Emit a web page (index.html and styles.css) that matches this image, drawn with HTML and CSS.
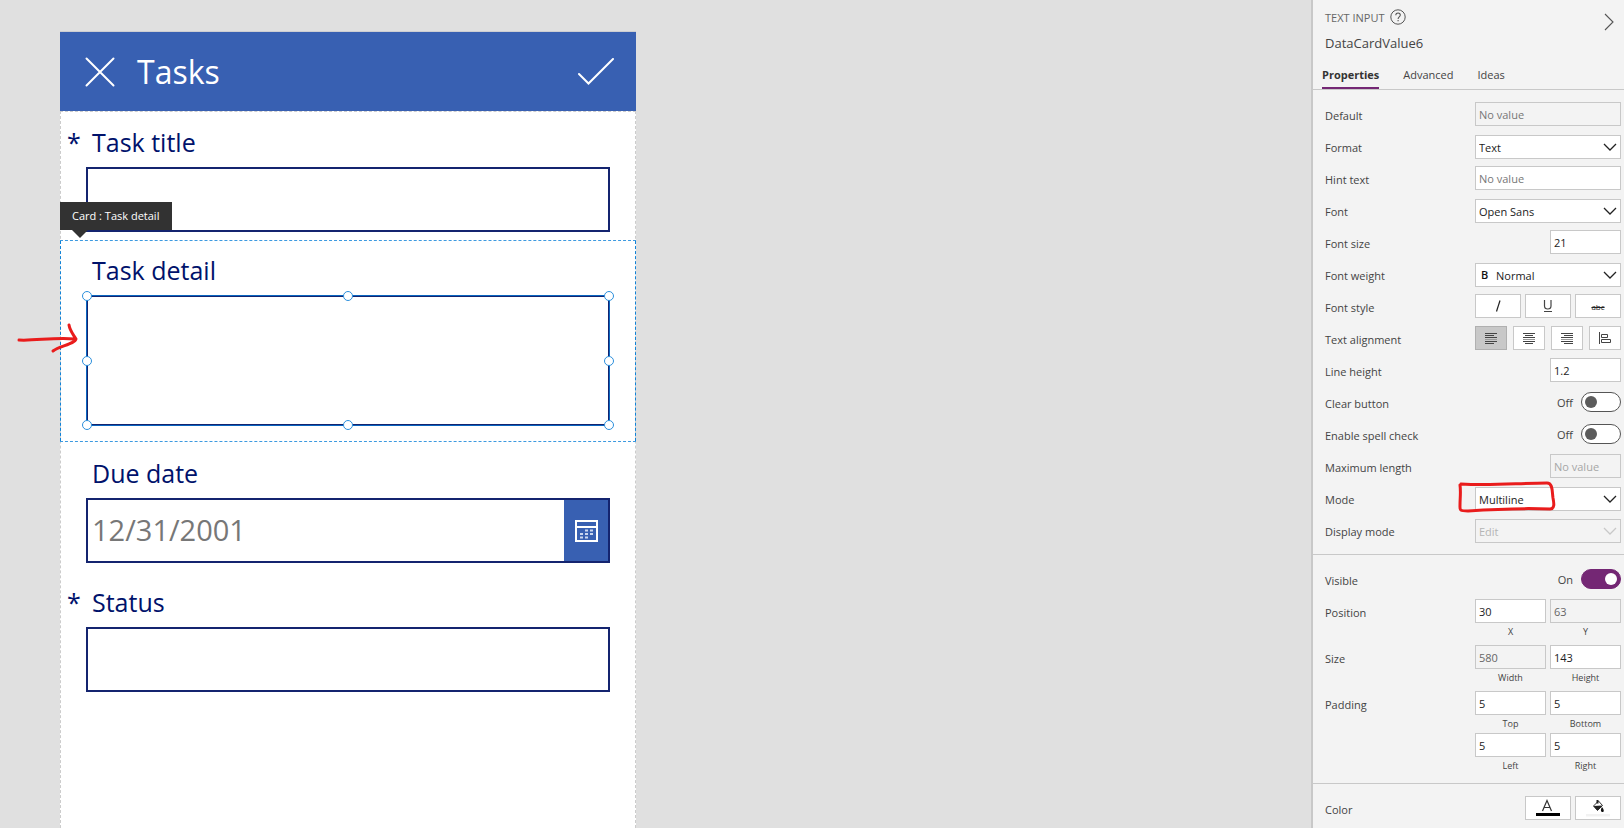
FILE: index.html
```html
<!DOCTYPE html>
<html lang="en">
<head>
<meta charset="utf-8">
<title>Tasks</title>
<link rel="stylesheet" href="styles.css">
</head>
<body>
<svg class="defs" aria-hidden="true">
  <symbol id="chevron" viewBox="0 0 14 8"><path d="M1 1l6 6 6-6" fill="none" stroke="currentColor" stroke-width="1.3"/></symbol>
</svg>
<main class="canvas">
  <section class="phone">
    <header class="app-bar">
      <button class="bar-button" aria-label="Cancel"><svg width="30" height="30" viewBox="0 0 30 30"><path d="M1.500 1.500l27 27M28.500 1.500l-27 27"/></svg></button>
      <h1 class="app-title">Tasks</h1>
      <button class="bar-button" aria-label="Save"><svg width="36" height="27" viewBox="0 0 36 27"><path d="M1 16l9.500 9.500L35 1"/></svg></button>
    </header>
    <form class="form">
      <div class="card">
        <label class="card-label" for="title"><span class="star">*</span>Task title</label>
        <div class="field"><input class="box" id="title" type="text"></div>
      </div>
      <div class="card card-selected">
        <div class="tooltip" role="tooltip">Card : Task detail</div>
        <label class="card-label" for="detail"><span class="star"></span>Task detail</label>
        <div class="field selection">
          <textarea class="box box-multi" id="detail"></textarea>
          <i class="handle top left"></i><i class="handle top center"></i><i class="handle top right"></i>
          <i class="handle middle left"></i><i class="handle middle right"></i>
          <i class="handle bottom left"></i><i class="handle bottom center"></i><i class="handle bottom right"></i>
        </div>
      </div>
      <div class="card">
        <label class="card-label" for="due"><span class="star"></span>Due date</label>
        <div class="field box date">
          <input class="date-input" id="due" type="text" placeholder="12/31/2001">
          <button type="button" class="date-button" aria-label="Open calendar">
            <svg width="23" height="22" viewBox="0 0 23 22"><path d="M1 1h21v20H1zM1 7h21" fill="none" stroke="#fff" stroke-width="2"/><path d="M10 9.500h3v2h-3zM15 9.500h3v2h-3zM5 13h3v2H5zM10 13h3v2h-3zM15 13h3v2h-3zM5 16.500h3v2H5zM10 16.500h3v2h-3z" fill="#cbd7ef"/></svg>
          </button>
        </div>
      </div>
      <div class="card">
        <label class="card-label" for="status"><span class="star">*</span>Status</label>
        <div class="field"><input class="box" id="status" type="text"></div>
      </div>
    </form>
  </section>
  <svg class="arrow" width="62" height="34" viewBox="0 0 62 34" aria-hidden="true"><path d="M2 18C18 19 38 15 58 17M52 3c1 6 4 9 7 14c-1 5-17 7-23 12" /></svg>
</main>

<aside class="panel">
  <header class="panel-head">
    <div class="panel-kind">TEXT INPUT
      <svg width="16" height="16" viewBox="0 0 16 16" fill="none" stroke="#555"><circle cx="8" cy="8" r="7.200"/><path d="M5.800 6.200c0-3 4.500-2.800 4.500-.1 0 1.700-2.200 1.900-2.200 3.800M8.100 11v1.300" stroke-width="1.100"/></svg>
    </div>
    <button class="collapse" aria-label="Collapse panel"><svg width="10" height="18" viewBox="0 0 10 18"><path d="M1 1l8 8-8 8" fill="none" stroke="#555" stroke-width="1.100"/></svg></button>
    <div class="panel-name">DataCardValue6</div>
  </header>
  <nav class="tabs">
    <button class="tab tab-active">Properties</button>
    <button class="tab">Advanced</button>
    <button class="tab">Ideas</button>
  </nav>

  <div class="group">
    <div class="row"><label for="p1">Default</label><div class="control"><input class="input readonly" id="p1" placeholder="No value"></div></div>
    <div class="row row-select"><label for="p2">Format</label><div class="control select"><select id="p2"><option>Text</option></select><svg class="chev"><use href="#chevron"/></svg></div></div>
    <div class="row"><label for="p3">Hint text</label><div class="control"><input class="input" id="p3" placeholder="No value"></div></div>
    <div class="row row-select"><label for="p4">Font</label><div class="control select"><select id="p4"><option>Open Sans</option></select><svg class="chev"><use href="#chevron"/></svg></div></div>
    <div class="row"><label for="p5">Font size</label><div class="control"><input class="input half" id="p5" value="21"></div></div>
    <div class="row row-select"><label for="p6">Font weight</label><div class="control select weight"><span class="weight-mark">B</span><select id="p6"><option>Normal</option></select><svg class="chev"><use href="#chevron"/></svg></div></div>
    <div class="row"><span>Font style</span><div class="control buttons">
      <button class="tool" aria-label="Italic"><svg width="16" height="16" viewBox="0 0 16 16"><path d="M10 2.500l-3.500 11" stroke="#222" stroke-width="1.200"/></svg></button>
      <button class="tool" aria-label="Underline"><svg width="16" height="16" viewBox="0 0 16 16"><path d="M4.500 2v6c0 4 6.500 4 6.500 0V2M4 13.500h8" fill="none" stroke="#444" stroke-width="1.200"/></svg></button>
      <button class="tool strike" aria-label="Strikethrough">abc</button>
    </div></div>
    <div class="row"><span>Text alignment</span><div class="control buttons align">
      <button class="tool tool-on" aria-label="Align left"><svg width="12" height="12" viewBox="0 0 12 12"><path d="M0 1.500h12M0 3.500h9M0 5.500h12M0 9.500h12M0 11.500h9"/><path class="soft" d="M0 7.500h12"/></svg></button>
      <button class="tool" aria-label="Align center"><svg width="12" height="12" viewBox="0 0 12 12"><path d="M0 1.500h12M2 3.500h8M0 5.500h12M0 9.500h12M2 11.500h8"/><path class="soft" d="M0 7.500h12"/></svg></button>
      <button class="tool" aria-label="Align right"><svg width="12" height="12" viewBox="0 0 12 12"><path d="M0 1.500h12M3 3.500h9M0 5.500h12M0 9.500h12M3 11.500h9"/><path class="soft" d="M0 7.500h12"/></svg></button>
      <button class="tool" aria-label="Justify"><svg width="12" height="12" viewBox="0 0 12 12"><path d="M.5 0v12M2.500 2.500h6v3h-6zM2.500 7.500h9v3h-9z" fill="none"/></svg></button>
    </div></div>
    <div class="row"><label for="p7">Line height</label><div class="control"><input class="input half" id="p7" value="1.2"></div></div>
    <div class="row"><label for="p8">Clear button</label><div class="control switch"><span>Off</span><input class="toggle" type="checkbox" id="p8"></div></div>
    <div class="row"><label for="p9">Enable spell check</label><div class="control switch"><span>Off</span><input class="toggle" type="checkbox" id="p9"></div></div>
    <div class="row"><label for="p10">Maximum length</label><div class="control"><input class="input half" id="p10" placeholder="No value" disabled></div></div>
    <div class="row row-select"><label for="p11">Mode</label><div class="control select"><select id="p11"><option>Multiline</option></select><svg class="chev"><use href="#chevron"/></svg>
      <svg class="highlight" viewBox="0 0 98 34" aria-hidden="true"><path d="M3 4c30 2 58-1 86-1c6 0 5 9 6 15c1 5 2 11-3 11c-28-1-55 0-82 2c-9 0-8-1-8-6c0-7 1-13 0-20"/></svg></div></div>
    <div class="row row-select"><label for="p12">Display mode</label><div class="control select"><select id="p12" disabled><option>Edit</option></select><svg class="chev chev-off"><use href="#chevron"/></svg></div></div>
  </div>

  <div class="group">
    <div class="row"><label for="p13">Visible</label><div class="control switch"><span>On</span><input class="toggle" type="checkbox" id="p13" checked></div></div>
    <div class="pair-row"><span>Position</span><div class="control pairs">
      <label class="pair"><input class="input" value="30">X</label>
      <label class="pair"><input class="input readonly" value="63" readonly>Y</label>
    </div></div>
    <div class="pair-row"><span>Size</span><div class="control pairs">
      <label class="pair"><input class="input readonly" value="580" readonly>Width</label>
      <label class="pair"><input class="input" value="143">Height</label>
    </div></div>
    <div class="pair-row"><span>Padding</span><div class="control pairs">
      <label class="pair"><input class="input" value="5">Top</label>
      <label class="pair"><input class="input" value="5">Bottom</label>
      <label class="pair"><input class="input" value="5">Left</label>
      <label class="pair"><input class="input" value="5">Right</label>
    </div></div>
  </div>

  <div class="group group-color">
    <div class="row"><span>Color</span><div class="control buttons colors">
      <button class="tool" aria-label="Text color"><svg width="24" height="18" viewBox="0 0 24 18"><path d="M6.500 12L11 1.500 15.500 12M8 8.500h6" fill="none" stroke="#333" stroke-width="1.200"/><path d="M0 14h24v3H0z"/></svg></button>
      <button class="tool" aria-label="Fill color"><svg width="24" height="18" viewBox="0 0 24 18"><path d="M7.500 7l5-5 4 4.500-5 5z" fill="#fff" stroke="#333"/><path d="M7.500 7l9-.5-5 5zM10.500 1h2v3.500h-2z" fill="#222"/><path d="M16 8c2 2.500 2.500 5 .5 5s-2-2.500-.5-5z" fill="#111"/><path d="M0 15h24v2.500H0z" fill="#f2f2f2"/></svg></button>
    </div></div>
  </div>
</aside>
</body>
</html>
```

FILE: styles.css
```css
* { box-sizing: border-box; }

body {
  margin: 0;
  display: flex;
  min-height: 100vh;
  font-family: "Open Sans", "Noto Sans", sans-serif;
  font-size: 11px;
  color: #444;
  background: #e0e0e0;
}

button, input, select, textarea { font: inherit; color: inherit; margin: 0; }
button { padding: 0; border: 0; background: none; }
.defs { position: absolute; width: 0; height: 0; }

/* Canvas */
.canvas { position: relative; flex: 1; display: flex; padding: 32px 60px 0; }
.phone { flex: 0 1 576px; display: flex; flex-direction: column; background: #fff; box-shadow: 0 -1px #cdced2; }
.app-bar { display: flex; align-items: center; gap: 22px; height: 79px; padding: 0 22px 0 25px; background: #3860b2; color: #fff; }
.app-title { flex: 1; margin: 0; font-size: 32px; line-height: 44px; font-weight: 400; }
.bar-button { display: flex; }
.bar-button path { fill: none; stroke: #fff; stroke-width: 2; stroke-linecap: round; }

.form { flex: 1; border: 1px dashed #ccc; border-bottom: 0; }
.card { padding-bottom: 8px; }
.card-label { display: flex; padding: 13px 0 8px 6px; font-size: 25px; line-height: 34px; color: #00126b; }
.card + .card .card-label { padding-top: 14px; }
.star { width: 25px; }
.field { margin: 0 25px; }
.box { display: block; width: 100%; height: 65px; padding: 0 5px; border: 2px solid #14246f; border-radius: 0; background: #fff; font-size: 29px; outline: 0; }

.card-selected { position: relative; margin: 0 -1px; padding: 0 1px 15px; border: 1px dashed #3d9ae0; border-width: 1px 0; }
.card-selected::before, .card-selected::after { content: ""; position: absolute; top: 0; bottom: 0; border-left: 1px dashed #1083d8; }
.card-selected::before { left: 0; }
.card-selected::after { right: 0; }
.card + .card-selected .card-label { padding-top: 12px; }
.selection { position: relative; }
.box-multi { height: 131px; resize: none; border: 1px solid #0a66c0; box-shadow: inset 0 0 0 1px #14246f; }
.handle { position: absolute; width: 10px; height: 10px; border: 1px solid #2b8fdc; border-radius: 50%; background: #fff; transform: translate(-50%, -50%); }
.top { top: 1px; }
.middle { top: 50%; }
.bottom { top: calc(100% - 1px); }
.left { left: 1px; }
.center { left: 50%; }
.right { left: calc(100% - 1px); }

.tooltip { position: absolute; z-index: 1; left: 0; bottom: calc(100% + 11px); padding: 5px 13px 6px 12px; line-height: 17px; background: #323232; color: #fff; white-space: nowrap; }
.tooltip::after { content: ""; position: absolute; top: 100%; left: 12px; border: 8px solid transparent; border-top-color: #323232; border-bottom: 0; }

.date { display: flex; width: auto; padding: 0; }
.date-input { flex: 1; min-width: 0; padding: 0 4px 2px; border: 0; outline: 0; }
.date-input::placeholder { color: #777; opacity: 1; }
.date-button { display: flex; align-items: center; justify-content: center; width: 44px; background: #3860b2; }

.arrow { position: absolute; left: 17px; top: 322px; }
.arrow path, .highlight path { fill: none; stroke: #e91c1c; stroke-width: 3; stroke-linecap: round; stroke-linejoin: round; }

/* Properties panel */
.panel { width: 313px; border-left: 2px solid #c8c8c8; background: #f3f3f3; }
.panel-head { display: grid; grid-template-columns: 1fr auto; padding: 8px 10px 0 12px; }
.panel-kind { display: flex; align-items: center; gap: 5px; height: 18px; color: #666; }
.collapse { display: flex; height: 18px; padding-top: 5px; }
.panel-name { padding: 8px 0 5px; font-size: 13px; line-height: 18px; }
.tabs { display: flex; gap: 24px; padding: 5px 9px 0; border-bottom: 1px solid #c8c8c8; }
.tab { height: 27px; padding-bottom: 1px; border-bottom: 2px solid transparent; }
.tab-active { border-color: #742774; font-weight: 700; color: #333; }

.group { padding: 8px 3px 8px 12px; border-bottom: 1px solid #c8c8c8; }
.group-color { border: 0; padding-bottom: 0; }
.row, .pair-row { display: flex; justify-content: space-between; }
.row { height: 32px; align-items: center; }
.row-select .control { margin-top: 2px; }
.row > :first-child { padding-top: 3px; }
.control { width: 146px; display: flex; justify-content: flex-end; }
.input, select { width: 100%; height: 24px; padding: 0 3px; border: 1px solid #c8c8c8; border-radius: 0; background: #fff; color: #222; }
.input::placeholder { color: #777; opacity: 1; }
.input:disabled, .readonly, select:disabled { background: #f3f3f3; color: #666; }
.input:disabled::placeholder { color: #a6a6a6; }
.half { width: 71px; }
.select { position: relative; }
select { appearance: none; opacity: 1; }
select:disabled { color: #b5b5b5; }
.chev { position: absolute; right: 4px; top: 8px; width: 14px; height: 8px; color: #222; pointer-events: none; }
.chev-off { color: #c8c8c8; }
.weight select { padding-left: 20px; }
.weight-mark { position: absolute; left: 6px; top: 4px; line-height: 16px; font-weight: 600; color: #111; }
.highlight { position: absolute; left: -17px; top: -7px; width: 98px; height: 34px; pointer-events: none; }

.buttons { gap: 4px; }
.tool { display: flex; flex: 1; align-items: center; justify-content: center; height: 24px; border: 1px solid #c8c8c8; background: #fff; }
.strike { font-size: 8px; text-decoration: line-through; color: #222; }
.align { gap: 6px; }
.align path { stroke: #444; stroke-width: 1; }
.align .soft { stroke: #999; }
.tool-on { background: #c8c8c8; border-color: #b0b0b0; }
.colors { width: 96px; }

.switch { align-items: center; gap: 8px; }
.toggle { appearance: none; display: flex; width: 40px; height: 20px; padding: 3px; border: 1px solid #555; border-radius: 10px; background: #fff; }
.toggle::before { content: ""; width: 12px; height: 12px; border-radius: 50%; background: #5c5c5c; }
.toggle:checked { justify-content: flex-end; background: #742774; border-color: #742774; }
.toggle:checked::before { background: #fff; }

.pair-row { margin-top: 4px; }
.pair-row > :first-child { padding-top: 6px; }
.pairs { display: grid; grid-template-columns: 1fr 1fr; column-gap: 4px; }
.pair { height: 42px; font-size: 9px; line-height: 18px; text-align: center; }
.pair .input { display: block; font-size: 11px; }
```
